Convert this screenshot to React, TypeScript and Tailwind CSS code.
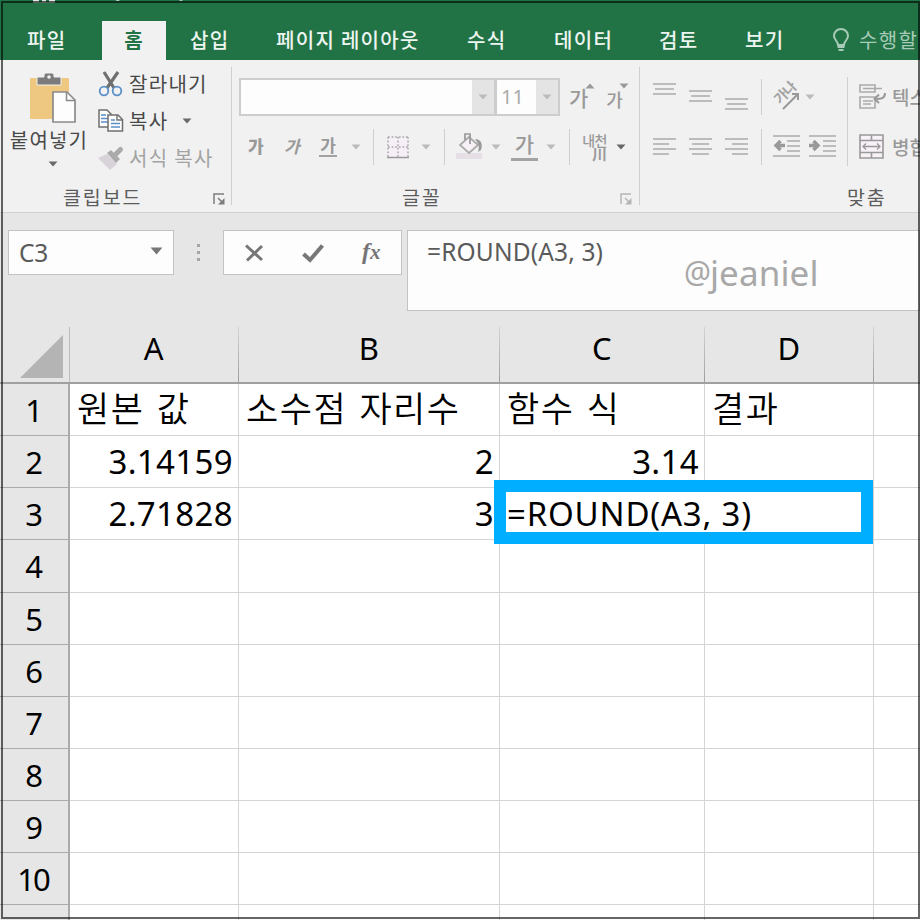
import { type ReactNode } from "react";

const KR = "font-['Noto_Sans_CJK_KR',sans-serif]";
const UI = "font-['Noto_Sans','Noto_Sans_CJK_KR',sans-serif]";

interface BoxProps {
  className?: string;
  children?: ReactNode;
}

interface IconProps extends BoxProps {
  w: number;
  h: number;
}

const Icon = ({ w, h, className = "", children }: IconProps) => (
  <svg width={w} height={h} viewBox={`0 0 ${w} ${h}`} fill="none" className={`shrink-0 overflow-visible ${className}`}>
    {children}
  </svg>
);

const Caret = ({ className = "" }: BoxProps) => (
  <Icon w={10} h={6} className={className}>
    <path d="M0.5 0.5h9L5 5.5z" fill="currentColor" />
  </Icon>
);

const Divider = ({ className = "" }: BoxProps) => (
  <div className={`w-px shrink-0 bg-[#cfcfcf] ${className}`} />
);

const Launcher = ({ className = "" }: BoxProps) => (
  <Icon w={13} h={13} className={className}>
    <path d="M1 11V1h10M5 5l5 5" stroke="currentColor" strokeWidth="1.5" />
    <path d="M11.5 5v6.5H5z" fill="currentColor" />
  </Icon>
);

const Lines = ({ rows, className = "" }: { rows: number[][]; className?: string }) => (
  <Icon w={23} h={36} className={className}>
    {rows.map(([y, x1, x2]) => (
      <path key={y} d={`M${x1} ${y}H${x2}`} stroke="#aaa" strokeWidth="1.5" />
    ))}
  </Icon>
);

const tabs = [
  { label: "삽입", className: "ml-[24px] w-[86px]" },
  { label: "페이지 레이아웃", className: "w-[191px]" },
  { label: "수식", className: "w-[87px]" },
  { label: "데이터", className: "w-[105px]" },
  { label: "검토", className: "w-[86px]" },
  { label: "보기", className: "w-[87px]" },
];

const TabBar = () => (
  <header className={`flex h-[60px] shrink-0 flex-col bg-[#217346] text-[20px] font-medium text-[#edf5f0] ${KR}`}>
    <div className="flex h-[21px] shrink-0 items-start">
      <Icon w={190} h={4} className="ml-[32px]">
        <path d="M1 0h22v3H1z" fill="#dce9e2" />
        <path d="M7 0h3v2H7zM14 0h3v2h-3z" fill="#217346" />
        <path d="M83 0h5l-2 1zM147 0h4l-2 1z" fill="#dce9e2" />
      </Icon>
    </div>
    <nav className="flex h-[39px] items-start whitespace-nowrap leading-[37px] tracking-[1.3px]">
      <div className="w-[102px] shrink-0 pl-[27px]">파일</div>
      <div className="h-[39px] w-[64px] shrink-0 bg-[#f1f1f1] text-center font-bold text-[#217346]">홈</div>
      {tabs.map((tab) => (
        <div key={tab.label} className={`shrink-0 ${tab.className}`}>
          {tab.label}
        </div>
      ))}
      <Icon w={18} h={24} className="mt-[7px] text-[#a8cbb7]">
        <path d="M6 17c0-4-4-5-4-9a7 7 0 0 1 14 0c0 4-4 5-4 9z" stroke="currentColor" strokeWidth="2" />
        <path d="M5.500 19h7M6.500 22h5" stroke="currentColor" strokeWidth="2" />
      </Icon>
      <div className="ml-[9px] shrink-0 font-normal text-[#a8cbb7]">수행할</div>
    </nav>
  </header>
);

const ClipboardGroup = () => (
  <section className="flex h-full w-[231px] shrink-0 flex-col text-[#484848]">
    <div className="flex h-[123px]">
      <div className="flex w-[97px] shrink-0 flex-col items-center">
        <Icon w={48} h={50} className="ml-[8px] mt-[12px]">
          <path d="M1 6q0-1 1-1h37q1 0 1 1v13H24v27H2q-1 0-1-1z" fill="#eec880" />
          <path d="M8 4h7V2q0-2 2-2h6q2 0 2 2v2h7v8H8z" fill="#7b7b7b" stroke="#f1f1f1" strokeWidth="1" />
          <circle cx="20" cy="4" r="1.800" fill="#f1f1f1" />
          <path d="M24 19h14l8 8v22H24z" fill="#fdfdfd" stroke="#8a8a8a" strokeWidth="1.700" />
          <path d="M37.500 19v8.500H46" stroke="#8a8a8a" strokeWidth="1.500" />
        </Icon>
        <div className="ml-px mt-[5px] text-[20px] leading-[24px] tracking-[1.2px]">붙여넣기</div>
        <Caret className="ml-[9px] mt-[9px] text-[#6a6a6a]" />
      </div>
      <div className="flex flex-col whitespace-nowrap pt-[4px] text-[20px] leading-[36px] tracking-[1.3px]">
        <div className="flex h-[37px] items-center">
          <Icon w={26} h={26} className="ml-[1px]">
            <path d="M6 1l10 16M20 1L9 17" stroke="#6f6f6f" strokeWidth="3.200" />
            <circle cx="6" cy="20" r="4.300" stroke="#5b8fc7" strokeWidth="1.800" />
            <circle cx="19" cy="20" r="4.300" stroke="#5b8fc7" strokeWidth="1.800" />
          </Icon>
          <span className="ml-[5px]">잘라내기</span>
        </div>
        <div className="flex h-[37px] items-center">
          <Icon w={26} h={24} className="ml-[1px]">
            <path d="M1 1h8l4 4v13H1z" fill="#fdfdfd" stroke="#6f6f6f" strokeWidth="1.500" />
            <path d="M3 6h5M3 9.500h7M3 13h7" stroke="#5b8fc7" strokeWidth="1.500" />
            <path d="M10 6h10l4.500 4.500V22H10z" fill="#fdfdfd" stroke="#6f6f6f" strokeWidth="1.500" />
            <path d="M19 6v5h5" stroke="#6f6f6f" strokeWidth="1.400" />
            <path d="M13 11h4M13 14.500h9M13 18h9" stroke="#5b8fc7" strokeWidth="1.500" />
          </Icon>
          <span className="ml-[5px]">복사</span>
          <Caret className="ml-[14px] text-[#6a6a6a]" />
        </div>
        <div className="flex h-[37px] items-center text-[#a3a3a3]">
          <Icon w={28} h={24}>
            <path d="M1 12l9-4 10 10-7 6z" fill="#d8d3d8" />
            <path d="M10 7l4-3 9 9-4 4z" fill="#aaa" />
            <path d="M19 8l4.500-4.500" stroke="#aaa" strokeWidth="5" strokeLinecap="round" />
          </Icon>
          <span className="ml-[4px]">서식 복사</span>
        </div>
      </div>
    </div>
    <div className="flex h-[28px] text-[19.500px] leading-[26px] text-[#5c5c5c]">
      <span className="ml-[63px] w-[150px] tracking-[1.900px]">클립보드</span>
      <Launcher className="mt-[9px] text-[#7c7c7c]" />
    </div>
  </section>
);

const FontGroup = () => (
  <section className="flex h-full w-[407px] shrink-0 flex-col text-[#999]">
    <div className="mt-[17px] flex h-[38px] shrink-0">
      <div className="ml-[7px] flex h-[38px] w-[257px] shrink-0 justify-end border-2 border-[#cdcdcd] bg-[#fdfdfd]">
        <div className="flex w-[22px] items-center justify-center bg-[#e4e4e4] text-[#bbb]">
          <Caret />
        </div>
      </div>
      <div className="-ml-[1px] flex h-[38px] w-[65px] shrink-0 justify-between border-2 border-[#cdcdcd] bg-[#fdfdfd]">
        <span className={`pl-[4px] text-[20px] leading-[33px] text-[#aaa] ${UI}`}>11</span>
        <div className="flex w-[22px] items-center justify-center bg-[#e4e4e4] text-[#bbb]">
          <Caret />
        </div>
      </div>
      <span className="ml-[9px] text-[21px] font-medium leading-[38px]">가</span>
      <Caret className="-ml-[3px] mt-[5px] rotate-180" />
      <span className="ml-[11px] text-[18px] font-medium leading-[42px]">가</span>
      <Caret className="-ml-[4px] mt-[5px]" />
    </div>
    <div className="mt-[13px] flex h-[36px] shrink-0 items-center text-[17px] font-bold leading-[30px]">
      <span className="ml-[16px] w-[36px] pb-[3px] font-black">가</span>
      <span className="w-[35px] pb-[3px] italic">가</span>
      <span className="flex h-[20px] w-[18px] justify-center border-b-2 border-[#a3a3a3] leading-[16px]">가</span>
      <Caret className="ml-[14px] text-[#bbb]" />
      <Divider className="ml-[12px] h-[36px]" />
      <Icon w={23} h={23} className="ml-[13px]">
        <path d="M1 1h20v20H1z" fill="#f7eff7" />
        <path d="M1 1h20M1 11h20M1 1v20M11 1v20M21 1v20" stroke="#aaa" strokeWidth="1.500" strokeDasharray="1.800 1.800" />
        <path d="M0 21.500h22" stroke="#999" strokeWidth="1.500" />
      </Icon>
      <Caret className="ml-[11px] text-[#bbb]" />
      <Divider className="ml-[13px] h-[36px]" />
      <Icon w={28} h={28} className="ml-[11px]">
        <path d="M0 20h26v6H0z" fill="#e6e0e6" />
        <path d="M4 12l9-8 9 8-9 8z" fill="#f7f1f7" stroke="#aaa" strokeWidth="1.700" />
        <path d="M9 7V1h5v10" stroke="#999" strokeWidth="1.700" />
        <path d="M19 6c6 0 8 5 6 11l-3 2c2-6 0-9-3-13z" fill="#999" />
      </Icon>
      <Caret className="ml-[7px] text-[#bbb]" />
      <span className="ml-[10px] flex h-[27px] w-[27px] justify-center border-b-[3px] border-[#a3a3a3] text-[21px] font-medium leading-[19px]">가</span>
      <Caret className="ml-[8px] text-[#bbb]" />
      <Divider className="ml-[13px] h-[36px]" />
      <div className="ml-[12px] flex w-[25px] shrink-0 flex-col items-end whitespace-nowrap">
        <span className="text-[14px] font-medium leading-[14px] tracking-[-0.5px]">내천</span>
        <span className="text-[15px] font-bold leading-[14px]">川</span>
      </div>
      <Caret className="ml-[9px] text-[#666]" />
    </div>
    <div className="mt-[19px] flex h-[28px] text-[19.500px] leading-[26px] text-[#5c5c5c]">
      <span className="ml-[170px] w-[218px] tracking-[1.900px]">글꼴</span>
      <Launcher className="mt-[9px] text-[#b5b5b5]" />
    </div>
  </section>
);

const AlignGroup = () => (
  <section className="flex h-full flex-1 flex-col overflow-hidden text-[#999]">
    <div className="flex h-[123px] shrink-0">
      <div className="w-[207px] shrink-0">
        <div className="mt-[17px] flex h-[37px] items-center">
          <Lines className="ml-[13px]" rows={[[5, 0, 23], [10, 2, 21], [15, 0, 23]]} />
          <Lines className="ml-[13px]" rows={[[12, 0, 23], [17, 2, 21], [22, 0, 23]]} />
          <Lines className="ml-[13px]" rows={[[20, 0, 23], [25, 2, 21], [30, 0, 23]]} />
          <Divider className="ml-[13px] h-[36px]" />
          <Icon w={30} h={30} className="ml-[10px]">
            <text transform="translate(8 23) rotate(-45)" fontSize="14" fontWeight="700" letterSpacing="-1" fill="#a3a3a3">
              가나
            </text>
            <path d="M11 27L26 12M20 12h6v6" stroke="#999" strokeWidth="2" />
          </Icon>
          <Caret className="ml-[3px] text-[#bbb]" />
        </div>
        <div className="mt-[13px] flex h-[37px] items-center">
          <Lines className="ml-[13px]" rows={[[10, 0, 23], [15, 0, 16], [20, 0, 23], [25, 0, 16]]} />
          <Lines className="ml-[13px]" rows={[[10, 0, 23], [15, 3, 20], [20, 0, 23], [25, 3, 20]]} />
          <Lines className="ml-[13px]" rows={[[10, 0, 23], [15, 7, 23], [20, 0, 23], [25, 7, 23]]} />
          <Divider className="ml-[13px] h-[36px]" />
          <Icon w={27} h={23} className="ml-[11px]">
            <path d="M0 1h27M14 6h13M14 11h13M14 16h13M0 21h27" stroke="#aaa" strokeWidth="1.500" />
            <path d="M12 10.500H3M7.500 6l-4.500 4.500 4.500 4.500" stroke="#999" strokeWidth="3.400" />
          </Icon>
          <Icon w={27} h={23} className="ml-[9px]">
            <path d="M0 1h27M14 6h13M14 11h13M14 16h13M0 21h27" stroke="#aaa" strokeWidth="1.500" />
            <path d="M0 10.500h9M4.500 6l4.500 4.500-4.500 4.500" stroke="#999" strokeWidth="3.400" />
          </Icon>
        </div>
      </div>
      <Divider className="mt-[16px] h-[89px]" />
      <div className="w-[90px] shrink-0 whitespace-nowrap text-[19px] font-medium">
        <div className="mt-[17px] flex h-[37px] items-center leading-[37px]">
          <Icon w={28} h={26} className="ml-[11px]">
            <path d="M1 1h15v7H1zM1 13h15v11H1z" stroke="#aaa" strokeWidth="1.600" />
            <path d="M4 4.500h19M4 17h10M4 20h8" stroke="#aaa" strokeWidth="1.400" />
            <path d="M26 9c0 5-3 6-9 6M20 10.500l-4.500 4.500 4.500 4" stroke="#999" strokeWidth="2" />
          </Icon>
          <span className="ml-[5px]">텍스트</span>
        </div>
        <div className="mt-[13px] flex h-[37px] items-center leading-[37px]">
          <Icon w={26} h={26} className="ml-[11px]">
            <path d="M1 1h23v23H1z" fill="#f7f1f7" />
            <path d="M1 1h23v23H1zM1 6.500h23M1 18.500h23M12.500 1v5.500M12.500 18.500V24" stroke="#999" strokeWidth="1.600" />
            <path d="M4 12.500h17M7 9.500l-3 3 3 3M18 9.500l3 3-3 3" stroke="#999" strokeWidth="1.300" />
          </Icon>
          <span className="ml-[7px]">병합</span>
        </div>
      </div>
    </div>
    <div className="ml-[207px] h-[28px] text-[19.500px] leading-[26px] tracking-[1.900px] text-[#5c5c5c]">맞춤</div>
  </section>
);

const Ribbon = () => (
  <div className={`flex h-[153px] shrink-0 items-start border-b border-[#d0d0d0] bg-[#f1f1f1] pt-px ${KR}`}>
    <ClipboardGroup />
    <Divider className="mt-[6px] h-[138px]" />
    <FontGroup />
    <Divider className="mt-[6px] h-[138px]" />
    <AlignGroup />
  </div>
);

const FormulaBar = () => (
  <div className={`flex h-[114px] shrink-0 items-start bg-[#e6e6e6] pt-[17px] text-[#5a5a5a] ${UI}`}>
    <div className="ml-[8px] flex h-[45px] w-[166px] shrink-0 items-center justify-between border border-[#c3c3c3] bg-[#fdfdfd] pl-[10px] pr-[10px]">
      <span className="text-[24.500px] leading-[45px] tracking-[-0.3px]">C3</span>
      <Icon w={13} h={8} className="-mt-[3px]">
        <path d="M0.500 0.500h12L6.500 7.500z" fill="#777" />
      </Icon>
    </div>
    <Icon w={4} h={18} className="ml-[23px] mt-[14px]">
      <path d="M0 0h3v3H0zM0 7h3v3H0zM0 14h3v3H0z" fill="#a5a5a5" />
    </Icon>
    <div className="ml-[22px] flex h-[45px] w-[179px] shrink-0 items-center border border-[#c3c3c3] bg-[#fdfdfd]">
      <Icon w={19} h={18} className="ml-[21px]">
        <path d="M1 1.500l16 14.500M17 2L2 16.500" stroke="#777" strokeWidth="3" />
      </Icon>
      <Icon w={22} h={20} className="ml-[38px]">
        <path d="M1.500 11l6.500 6L20.500 2.500" stroke="#777" strokeWidth="4" />
      </Icon>
      <span className="mb-[3px] ml-[38px] font-['Liberation_Serif',serif] text-[24px] font-bold italic leading-[38px] text-[#757575]">
        f<span className="text-[21px]">x</span>
      </span>
    </div>
    <div className="ml-[5px] h-[81px] flex-1 overflow-hidden whitespace-nowrap border border-[#c3c3c3] bg-[#fdfdfd] pl-[19px] text-[24.500px] leading-[42px] tracking-[0.15px]">
      =ROUND(A3, 3)
    </div>
  </div>
);

const columns = [
  { name: "A", width: "w-[169px]" },
  { name: "B", width: "w-[261px]" },
  { name: "C", width: "w-[205px]" },
  { name: "D", width: "w-[169px]" },
  { name: "", width: "w-[60px]" },
];

const rows: string[][] = [
  ["원본 값", "소수점 자리수", "함수 식", "결과"],
  ["3.14159", "2", "3.14", ""],
  ["2.71828", "3", "=ROUND(A3, 3)", ""],
  [],
  [],
  [],
  [],
  [],
  [],
  [],
  [],
];

// a formula being edited spills over the cell's right edge
const cellStyle = (value: string) => {
  if (/^\d/.test(value)) return "justify-end pr-[5px] text-[33px] tracking-[0.35px]";
  if (value.startsWith("=")) return "border-r-white pl-[7px] text-[33px] tracking-[0.8px]";
  return `pl-[7px] pb-[5px] text-[35px] font-[350] tracking-[1.5px] [word-spacing:3px] ${KR}`;
};

const Sheet = () => (
  <main className={`flex flex-1 flex-col overflow-hidden bg-white text-black ${UI}`}>
    <div className="flex h-[57px] shrink-0 border-b-2 border-[#a0a0a0] bg-[#e6e6e6]">
      <div className="flex w-[70px] shrink-0 items-start border-r border-[#bcbcbc]">
        <Icon w={43} h={43} className="ml-[20px] mt-[8px]">
          <path d="M43 0v43H0z" fill="#b4b4b4" />
        </Icon>
      </div>
      {columns.map((col) => (
        <div key={col.name} className={`flex shrink-0 ${col.width}`}>
          <div className="flex-1 text-center text-[31px] leading-[43px]">{col.name}</div>
          <div className="w-[1.500px] bg-linear-to-b from-[#d4d4d4] to-[#9e9e9e]" />
        </div>
      ))}
    </div>
    {rows.map((row, i) => (
      <div key={i} className="flex h-[52.150px] shrink-0">
        <div className="w-[70px] shrink-0 border-b border-r-2 border-[#ababab] bg-[#e6e6e6] pr-[2px] text-center text-[31px] leading-[52px] tracking-[-2px]">
          {i < 10 ? i + 1 : ""}
        </div>
        {columns.map((col, j) => (
          <div
            key={col.name}
            className={`flex shrink-0 items-center whitespace-nowrap border-b border-r border-[#d4d4d4] leading-[46px] ${col.width} ${cellStyle(row[j] ?? "")}`}
          >
            {row[j]}
          </div>
        ))}
      </div>
    ))}
  </main>
);

export default function App() {
  return (
    <div className="relative flex h-[920px] w-[920px] flex-col overflow-hidden">
      <TabBar />
      <Ribbon />
      <FormulaBar />
      <Sheet />
      <div className="absolute left-[494px] top-[480px] h-[64px] w-[379px] border-[12.500px] border-[#00aeff]" />
      <div className={`absolute left-[684px] top-[249px] flex items-start text-[35px] leading-[48px] text-[#a8a8a8] ${UI}`}>
        <span className="text-[30px] leading-[46px] tracking-[-1px]">@</span>
        <span className="tracking-[0.1px]">jeaniel</span>
      </div>
      <div className="absolute bottom-[1px] left-[1px] right-0 top-[1px] border-2 border-black/60" />
    </div>
  );
}
